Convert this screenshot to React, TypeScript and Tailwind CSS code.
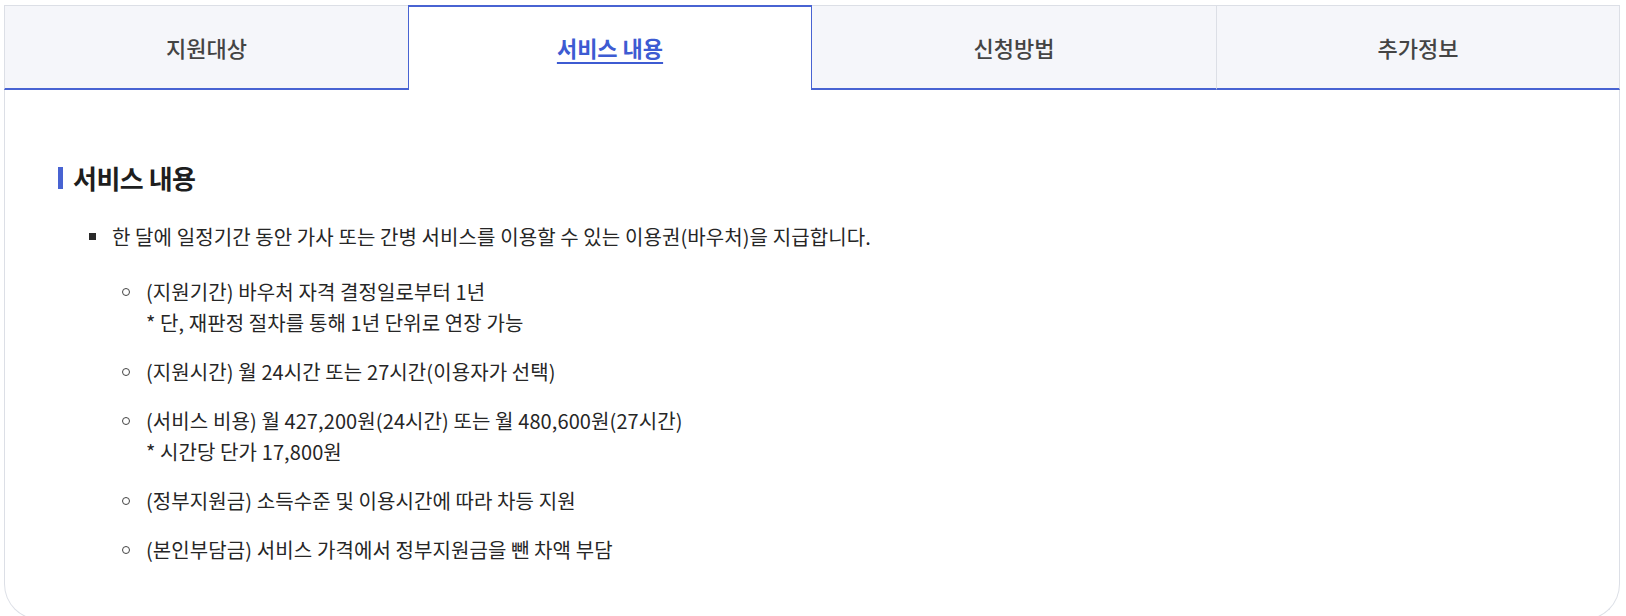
import { FC } from 'react';

const tabs = ['지원대상', '서비스 내용', '신청방법', '추가정보'];

const subItems: string[][] = [
    ['(지원기간) 바우처 자격 결정일로부터 1년', '* 단, 재판정 절차를 통해 1년 단위로 연장 가능'],
    ['(지원시간) 월 24시간 또는 27시간(이용자가 선택)'],
    ['(서비스 비용) 월 427,200원(24시간) 또는 월 480,600원(27시간)', '* 시간당 단가 17,800원'],
    ['(정부지원금) 소득수준 및 이용시간에 따라 차등 지원'],
    ['(본인부담금) 서비스 가격에서 정부지원금을 뺀 차액 부담'],
];

const App: FC = () => {
    const active = 1;

    return (
        <div className="h-[616px] overflow-hidden bg-white pl-[4px] pr-[6px] pt-[5px] font-['Noto_Sans_CJK_KR',sans-serif] text-[#262626]">
            {/* Tabs */}
            <div className="grid grid-cols-4">
                {tabs.map((tab, i) => {
                    const isActive = i === active;
                    return (
                        <div
                            key={tab}
                            className={
                                isActive
                                    ? 'flex h-[85px] items-center justify-center border-x border-t-2 border-[#4863d2] bg-white pb-[2px]'
                                    : `flex h-[85px] items-center justify-center border-t border-b-2 border-t-[#dcdfe6] border-b-[#4863d2] bg-[#f5f6fa] ${i === 0 ? 'border-l border-l-[#dcdfe6]' : ''} ${i === 3 ? 'border-l border-r border-l-[#dcdfe6] border-r-[#dcdfe6]' : ''}`
                            }
                        >
                            <span
                                className={
                                    isActive
                                        ? 'text-[22px] font-bold text-[#3d5bd2] underline decoration-2 underline-offset-[5px]'
                                        : 'text-[22px] font-medium text-[#444]'
                                }
                            >
                                {tab}
                            </span>
                        </div>
                    );
                })}
            </div>

            {/* Panel */}
            <div className="h-[530px] rounded-b-[36px] border-x border-b border-[#dcdfe6] pl-[53px] pt-[70px]">
                <div className="flex items-center">
                    <span className="mr-[10px] h-[22px] w-[5px] bg-[#4863d2]"></span>
                    <h3 className="text-[26px] font-bold leading-[36px] tracking-[-0.5px] text-[#1e1e1e]">서비스 내용</h3>
                </div>

                <ul className="mt-[25px] pl-[31px] text-[20px] leading-[31px] tracking-[0.1px]">
                    <li className="flex items-start">
                        <span className="mr-[16px] mt-[12px] h-[7px] w-[7px] flex-shrink-0 bg-[#2a2a2a]"></span>
                        <div>
                            <p>한 달에 일정기간 동안 가사 또는 간병 서비스를 이용할 수 있는 이용권(바우처)을 지급합니다.</p>
                            <ul className="mt-[24px] space-y-[18px] pl-[10px]">
                                {subItems.map((lines) => (
                                    <li key={lines[0]} className="flex items-start">
                                        <span className="mr-[16px] mt-[12px] h-[8px] w-[8px] flex-shrink-0 rounded-full border border-[#444]"></span>
                                        <div>
                                            {lines.map((line) => (
                                                <p key={line}>{line}</p>
                                            ))}
                                        </div>
                                    </li>
                                ))}
                            </ul>
                        </div>
                    </li>
                </ul>
            </div>
        </div>
    );
};

export default App;
